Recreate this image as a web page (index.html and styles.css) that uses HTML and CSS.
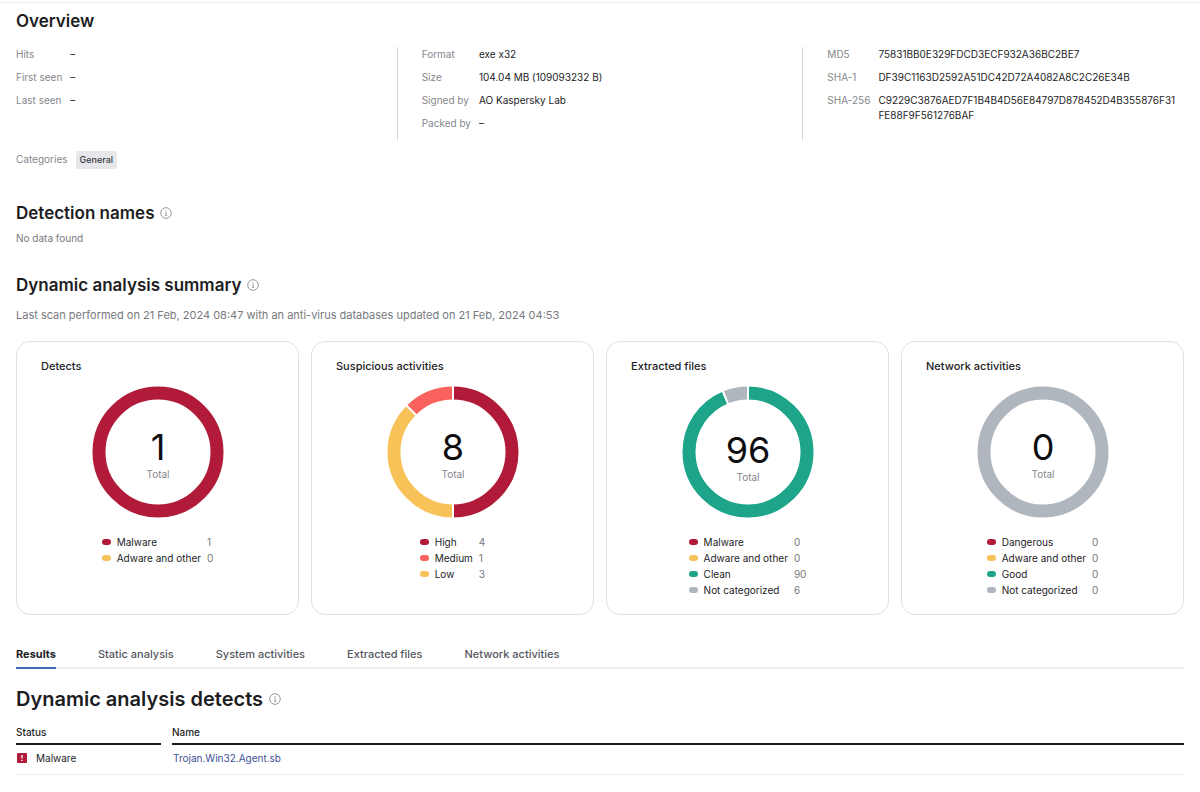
FILE: index.html
```html
<!DOCTYPE html>
<html lang="en">

<head>
    <meta charset="UTF-8">
    <meta name="viewport" content="width=device-width, initial-scale=1.0">
    <title>File report</title>
    <link rel="stylesheet" href="styles.css">
</head>

<body>
    <!-- Shared info icon -->
    <svg class="sprite" aria-hidden="true">
        <symbol id="info" viewBox="0 0 12 12">
            <circle cx="6" cy="6" r="5.3" fill="none" stroke="currentColor" stroke-width="0.9"/>
            <path d="M5.2 5.3h1v3M5 8.4h2.2" fill="none" stroke="currentColor" stroke-width="0.8"/>
            <circle cx="6" cy="3.6" r="0.6" fill="currentColor"/>
        </symbol>
    </svg>

    <main class="page">
        <!-- Overview -->
        <section>
            <h2>Overview</h2>
            <div class="overview">
                <dl class="facts facts-seen">
                    <dt>Hits</dt><dd>–</dd>
                    <dt>First seen</dt><dd>–</dd>
                    <dt>Last seen</dt><dd>–</dd>
                </dl>
                <dl class="facts facts-file">
                    <dt>Format</dt><dd>exe x32</dd>
                    <dt>Size</dt><dd>104.04 MB (109093232 B)</dd>
                    <dt>Signed by</dt><dd>AO Kaspersky Lab</dd>
                    <dt>Packed by</dt><dd>–</dd>
                </dl>
                <dl class="facts facts-hash">
                    <dt>MD5</dt><dd>75831BB0E329FDCD3ECF932A36BC2BE7</dd>
                    <dt>SHA-1</dt><dd>DF39C1163D2592A51DC42D72A4082A8C2C26E34B</dd>
                    <dt>SHA-256</dt><dd>C9229C3876AED7F1B4B4D56E84797D878452D4B355876F31<wbr>FE88F9F561276BAF</dd>
                </dl>
            </div>
            <div class="categories">
                <span>Categories</span>
                <span class="tag">General</span>
            </div>
        </section>

        <!-- Detection names -->
        <section class="detection">
            <h2>Detection names <svg class="info"><use href="#info"/></svg></h2>
            <p class="empty">No data found</p>
        </section>

        <!-- Dynamic analysis summary -->
        <section class="summary">
            <h2>Dynamic analysis summary <svg class="info"><use href="#info"/></svg></h2>
            <p class="scan">Last scan performed on 21 Feb, 2024 08:47 with an anti-virus databases updated on 21 Feb, 2024 04:53</p>

            <div class="cards">
                <article class="card">
                    <h3>Detects</h3>
                    <svg class="donut" viewBox="0 0 132 132">
                        <circle class="ring red" cx="66" cy="66" r="59"/>
                        <text class="count" x="66" y="74">1</text>
                        <text class="total" x="66" y="92">Total</text>
                    </svg>
                    <ul class="legend">
                        <li><i class="dot red"></i><span>Malware</span><b>1</b></li>
                        <li><i class="dot yellow"></i><span>Adware and other</span><b>0</b></li>
                    </ul>
                </article>

                <article class="card">
                    <h3>Suspicious activities</h3>
                    <svg class="donut" viewBox="0 0 132 132">
                        <circle class="ring red" cx="66" cy="66" r="59" pathLength="8" stroke-dasharray="4 4" transform="rotate(-90 66 66)"/>
                        <circle class="ring yellow" cx="66" cy="66" r="59" pathLength="8" stroke-dasharray="3 5" transform="rotate(90 66 66)"/>
                        <circle class="ring coral" cx="66" cy="66" r="59" pathLength="8" stroke-dasharray="1 7" transform="rotate(225 66 66)"/>
                        <path class="split" d="M66 0v14M66 118v14M19.3 19.3l10 10"/>
                        <text class="count" x="66" y="74">8</text>
                        <text class="total" x="66" y="92">Total</text>
                    </svg>
                    <ul class="legend">
                        <li><i class="dot red"></i><span>High</span><b>4</b></li>
                        <li><i class="dot coral"></i><span>Medium</span><b>1</b></li>
                        <li><i class="dot yellow"></i><span>Low</span><b>3</b></li>
                    </ul>
                </article>

                <article class="card">
                    <h3>Extracted files</h3>
                    <svg class="donut" viewBox="0 0 132 132">
                        <circle class="ring green" cx="66" cy="66" r="59" pathLength="96" stroke-dasharray="90 6" transform="rotate(-90 66 66)"/>
                        <circle class="ring gray" cx="66" cy="66" r="59" pathLength="96" stroke-dasharray="6 90" transform="rotate(247.5 66 66)"/>
                        <path class="split" d="M66 0v14M40.7 5l5.4 13"/>
                        <text class="count" x="66" y="77">96</text>
                        <text class="total" x="66" y="95">Total</text>
                    </svg>
                    <ul class="legend">
                        <li><i class="dot red"></i><span>Malware</span><b>0</b></li>
                        <li><i class="dot yellow"></i><span>Adware and other</span><b>0</b></li>
                        <li><i class="dot green"></i><span>Clean</span><b>90</b></li>
                        <li><i class="dot gray"></i><span>Not categorized</span><b>6</b></li>
                    </ul>
                </article>

                <article class="card">
                    <h3>Network activities</h3>
                    <svg class="donut" viewBox="0 0 132 132">
                        <circle class="ring gray" cx="66" cy="66" r="59"/>
                        <text class="count" x="66" y="74">0</text>
                        <text class="total" x="66" y="92">Total</text>
                    </svg>
                    <ul class="legend">
                        <li><i class="dot red"></i><span>Dangerous</span><b>0</b></li>
                        <li><i class="dot yellow"></i><span>Adware and other</span><b>0</b></li>
                        <li><i class="dot green"></i><span>Good</span><b>0</b></li>
                        <li><i class="dot gray"></i><span>Not categorized</span><b>0</b></li>
                    </ul>
                </article>
            </div>
        </section>

        <!-- Tabs -->
        <div class="tabs" role="tablist">
            <button class="tab active" role="tab" aria-selected="true">Results</button>
            <button class="tab" role="tab">Static analysis</button>
            <button class="tab" role="tab">System activities</button>
            <button class="tab" role="tab">Extracted files</button>
            <button class="tab" role="tab">Network activities</button>
        </div>

        <!-- Results -->
        <section>
            <h1>Dynamic analysis detects <svg class="info"><use href="#info"/></svg></h1>
            <table class="detects">
                <thead>
                    <tr><th>Status</th><th>Name</th></tr>
                </thead>
                <tbody>
                    <tr>
                        <td class="status">
                            <svg class="alert" viewBox="0 0 9 9"><rect width="9" height="9" rx="1" fill="#b11a38"/><path d="M4.5 1.8v3.2M4.5 6v1.2" stroke="#fff" stroke-width="1.2"/></svg>
                            Malware
                        </td>
                        <td><a href="#">Trojan.Win32.Agent.sb</a></td>
                    </tr>
                </tbody>
            </table>
        </section>
    </main>
</body>

</html>
```
FILE: styles.css
```css
* {
    box-sizing: border-box;
}

body {
    margin: 0;
    font-family: Inter, "Liberation Sans", sans-serif;
    font-size: 10px;
    line-height: 16px;
    color: #1d1d1f;
    background-color: #ffffff;
}

h1, h2, h3, p, ul, dl, dd {
    margin: 0;
    padding: 0;
}

.sprite {
    display: none;
}

.page {
    margin-top: 2px;
    padding: 6px 16px 16px;
    border-top: 1px solid #ececee;
}

h1, h2 {
    display: flex;
    align-items: center;
    gap: 6px;
    font-size: 17px;
    font-weight: 600;
    line-height: 24px;
}

h1 {
    margin-top: 18px;
    font-size: 20px;
}

.info {
    width: 12px;
    height: 12px;
    color: #8b8d93;
}

/* Overview */
.overview {
    display: flex;
    gap: 24px;
    margin-top: 14px;
}

.facts {
    flex: 1;
    display: grid;
    grid-template-columns: auto 1fr;
    align-content: start;
    gap: 8px;
    padding-bottom: 9px;
    line-height: 15px;
}

.facts-file,
.facts-hash {
    padding-left: 24px;
    border-left: 1px solid #d5d6d9;
}

.facts dt {
    color: #85878c;
}

.categories {
    display: flex;
    gap: 8px;
    margin-top: 11px;
    color: #85878c;
}

.tag {
    padding: 1px 4px;
    border-radius: 2px;
    background-color: #e6e7ea;
    color: #3b3c42;
    font-size: 9px;
    font-weight: 500;
}

.detection {
    margin-top: 32px;
}

.empty {
    margin-top: 5px;
    color: #77797e;
}

.summary {
    margin-top: 27px;
}

.scan {
    margin-top: 10px;
    color: #77797e;
    font-size: 11px;
}

/* Cards */
.cards {
    display: grid;
    grid-template-columns: repeat(4, 1fr);
    gap: 12px;
    margin-top: 18px;
}

.card {
    display: flex;
    flex-direction: column;
    align-items: center;
    padding: 16px 24px;
    border: 1px solid #dfe0e3;
    border-radius: 14px;
}

.card h3 {
    align-self: stretch;
    font-size: 11px;
    font-weight: 500;
}

.donut {
    width: 132px;
    height: 132px;
    margin-top: 12px;
}

.ring {
    fill: none;
    stroke: currentColor;
    stroke-width: 13;
}

.split {
    stroke: #ffffff;
    stroke-width: 2;
}

.count,
.total {
    text-anchor: middle;
}

.count {
    font-size: 36px;
    font-weight: 400;
    fill: #0d0d10;
}

.total {
    font-size: 10px;
    fill: #85878c;
}

.legend {
    display: grid;
    grid-template-columns: auto auto auto;
    align-items: center;
    column-gap: 6px;
    margin-top: 16px;
    list-style: none;
}

.legend li {
    display: contents;
}

.legend b {
    color: #77797e;
    font-weight: 400;
}

.dot {
    width: 9px;
    height: 6px;
    border-radius: 3px;
    background-color: currentColor;
}

.red { color: #b11a38; }
.coral { color: #fa625d; }
.yellow { color: #f7c358; }
.green { color: #1ea489; }
.gray { color: #afb6be; }

/* Tabs */
.tabs {
    display: flex;
    gap: 42px;
    margin-top: 29px;
    border-bottom: 2px solid #ebecef;
}

.tab {
    margin-bottom: -2px;
    padding: 2px 0 5px;
    border: 0;
    border-bottom: 2px solid transparent;
    background: none;
    color: #55575e;
    font: 500 11px/16px Inter, "Liberation Sans", sans-serif;
}

.tab.active {
    border-color: #4468b8;
    color: #1d1d1f;
    font-weight: 700;
}

/* Detects table */
.detects {
    display: block;
    margin-top: 13px;
}

.detects thead,
.detects tbody {
    display: block;
}

.detects tr {
    display: grid;
    grid-template-columns: 145px 1fr;
    gap: 11px;
}

.detects th {
    padding: 0 0 3px;
    border-bottom: 2px solid #1d1d1f;
    font-weight: 500;
    text-align: left;
}

.detects tbody tr {
    border-bottom: 1px solid #ececee;
}

.detects td {
    padding: 5px 1px 8px;
}

.status {
    display: flex;
    align-items: center;
    gap: 9px;
}

.alert {
    width: 10px;
    height: 10px;
}

.detects a {
    color: #3c5096;
    text-decoration: none;
}
```
